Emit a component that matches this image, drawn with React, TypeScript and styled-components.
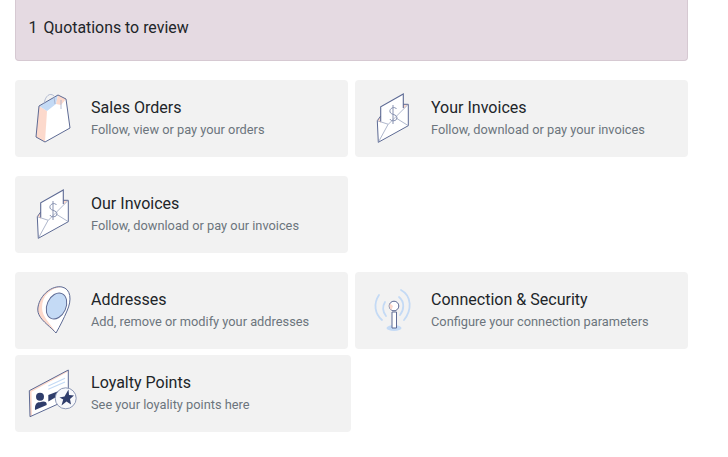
import React from "react";
import styled, { createGlobalStyle } from "styled-components";

const Global = createGlobalStyle`
  html, body { margin: 0; padding: 0; background: #fff; overflow: hidden; }
  body { font-family: Roboto, "Liberation Sans", sans-serif; }
`;

const Page = styled.main`
  display: flex;
  flex-direction: column;
  width: 728px;
  box-sizing: border-box;
  padding: 0 40px 0 15px;
`;

const Alert = styled.div`
  display: flex;
  align-items: center;
  gap: 6px;
  height: 61px;
  box-sizing: border-box;
  padding: 0 12.5px 6px;
  background: #e5dae2;
  border: 1px solid #d6c9d2;
  border-top: 0;
  border-radius: 0 0 4px 4px;
  color: #212529;
  font-size: 15.9px;
  margin-bottom: 19px;
`;

const Section = styled.section<{ $gap?: number; $after?: number }>`
  display: flex;
  flex-direction: column;
  gap: ${(p) => p.$gap ?? 0}px;
  margin-bottom: ${(p) => p.$after ?? 19}px;
`;

const Row = styled.div`
  display: flex;
  gap: 7px;
`;

const Card = styled.a<{ $width?: number }>`
  display: flex;
  align-items: flex-start;
  gap: 11px;
  box-sizing: border-box;
  width: ${(p) => p.$width ?? 333}px;
  height: 77px;
  padding: 8px 5px;
  background: #f2f2f2;
  border-radius: 4px;
  text-decoration: none;
`;

const Icon = styled.svg`
  flex: none;
  display: block;
  width: 60px;
  height: 60px;
`;

const Text = styled.div`
  display: flex;
  flex-direction: column;
  padding-top: 8px;
`;

const Title = styled.div`
  font-size: 16.05px;
  line-height: 24px;
  color: #212529;
`;

const Sub = styled.div`
  font-size: 12.8px;
  line-height: 20px;
  color: #6c757d;
`;

const S = "#5d6a94";

const Bag = () => (
  <Icon viewBox="0 3 60 60" fill="none">
    <path d="M19 21L38 10L46 14L50 43L25 57L16 52Z" fill="#fff" />
    <path d="M19 21L27 26L25 57L16 52Z" fill="#fcd9cc" />
    <path d="M19 21L38 10L36 19L27 26Z" fill="#c4daf5" />
    <path d="M38 10L46 14L41 20L36 19Z" fill="#fcd9cc" />
    <path d="M19 21L38 10L46 14L50 43L25 57L16 52Z" stroke={S} strokeWidth="1" strokeLinejoin="round" />
    <path d="M24 19C25 11 30 7 34 11M41 15V24M34 12L35 19" stroke="#a3aeca" strokeWidth="0.8" />
  </Icon>
);

const Envelope = () => (
  <Icon viewBox="0 3 60 60" fill="none">
    <path d="M17.3 35.7L48.3 19V40.7L18.3 57.3Z" fill="#fff" />
    <path d="M17.5 35L21 31V38ZM43 24V19.5L48 19.5Z" fill="#fcd9cc" />
    <path d="M20.7 21.7L43.3 9V24L28.3 39.3L20.7 36.5Z" fill="#fff" />
    <path d="M20.7 36.5V21.7L43.3 9V23" stroke={S} strokeWidth="1.1" />
    <path d="M43.3 19.3H48.3V40.7L18.3 57.3L17.3 35.7L20.7 31" stroke={S} strokeWidth="1" strokeLinejoin="round" />
    <path d="M17.3 35.7L28.3 39.3L48.3 19.3M18.3 57.3L28 39.5M48.3 40.7L36 33" stroke="#8d98b6" strokeWidth="0.7" />
    <path d="M36.5 24C35 21 29 23 30 27C31 30 37 29 37 33C37 36 31 37 30 34M33 20V39" stroke="#7b87a8" strokeWidth="0.9" />
  </Icon>
);

const Pin = () => (
  <Icon viewBox="0 0 60 60" fill="none">
    <path d="M36 53C28 44 16 38 18 27C20 15 32 5 42 7C51 9 52 20 47 31C44 38 40 46 36 53Z" fill="#fff" />
    <path d="M36 53C28 44 16 38 18 27C20 15 32 5 42 7C30 8 22 16 22 28C22 37 31 44 36 53Z" fill="#fcd9cc" />
    <path d="M36 53C28 44 16 38 18 27C20 15 32 5 42 7C51 9 52 20 47 31C44 38 40 46 36 53Z" stroke={S} strokeWidth="1" />
    <ellipse cx="36.5" cy="26" rx="9.5" ry="13.5" transform="rotate(24 36.5 26)" fill="#c4daf5" stroke={S} strokeWidth="1" />
  </Icon>
);

const Antenna = () => (
  <Icon viewBox="-5 0 60 60" fill="none">
    <ellipse cx="29" cy="48" rx="7.5" ry="3" fill="#c4daf5" />
    <path d="M14 15C8 24 10 34 17 40M20 22C17 27 18 32 21 36M36 10C47 16 47 30 39 40M34 17C40 22 39 30 35 35" stroke="#c4daf5" strokeWidth="1.8" strokeLinecap="round" />
    <path d="M27 32H31.5V48H27Z" fill="#fff" stroke={S} strokeWidth="1" />
    <circle cx="29" cy="26" r="4.8" fill="#fff" stroke={S} strokeWidth="1" />
    <path d="M25 23.5A4.8 4.8 0 0 0 26.5 30L28 26Z" fill="#fcd9cc" />
  </Icon>
);

const Loyalty = () => (
  <Icon viewBox="0 1 60 60" fill="none">
    <path d="M9.300 28.700L48.300 8V30L38 42L10 54.700Z" fill="#fff" />
    <path d="M9.300 28.700L10 54.700L12 53.800L11.500 29.800L48.300 9.500V8Z" fill="#fcd9cc" />
    <path d="M10 54.700L38 42M48.300 28V8L9.300 28.700L10 54.700" stroke={S} strokeWidth="1" strokeLinejoin="round" />
    <path d="M28.300 24L45 16.300M28.300 27.300L45 20" stroke="#c4daf5" strokeWidth="1.2" />
    <path d="M28.300 33L40 28.500L37 34.500L28.300 39.500Z" fill="#2f3d6b" />
    <circle cx="20" cy="34.700" r="4" fill="#2f3d6b" />
    <path d="M15 48C14.500 42 17 39.700 20 40.200C24 39 27 39.500 26.700 43Z" fill="#2f3d6b" />
    <ellipse cx="45.700" cy="36.300" rx="10.500" ry="10.500" fill="#f7f8fb" stroke="#8d98b6" strokeWidth="1" />
    <path d="M48.500 27.500L49 33L54 33.500L50 37L51 42.500L46.500 39.500L41.500 43.500L43.200 37.500L39.500 35.500L44.500 34.500Z" fill="#2f3d6b" />
  </Icon>
);

const Entry = ({ icon, title, sub, width }: { icon: React.ReactNode; title: string; sub: string; width?: number }) => (
  <Card $width={width}>
    {icon}
    <Text>
      <Title>{title}</Title>
      <Sub>{sub}</Sub>
    </Text>
  </Card>
);

export default function App() {
  return (
    <Page>
      <Global />
      <Alert>
        <span>1</span>
        <span>Quotations to review</span>
      </Alert>
      <Section>
        <Row>
          <Entry icon={<Bag />} title="Sales Orders" sub="Follow, view or pay your orders" />
          <Entry icon={<Envelope />} title="Your Invoices" sub="Follow, download or pay your invoices" />
        </Row>
      </Section>
      <Section>
        <Row>
          <Entry icon={<Envelope />} title="Our Invoices" sub="Follow, download or pay our invoices" />
        </Row>
      </Section>
      <Section $gap={6}>
        <Row>
          <Entry icon={<Pin />} title="Addresses" sub="Add, remove or modify your addresses" />
          <Entry icon={<Antenna />} title="Connection & Security" sub="Configure your connection parameters" />
        </Row>
        <Row>
          <Entry icon={<Loyalty />} title="Loyalty Points" sub="See your loyality points here" width={336} />
        </Row>
      </Section>
    </Page>
  );
}
